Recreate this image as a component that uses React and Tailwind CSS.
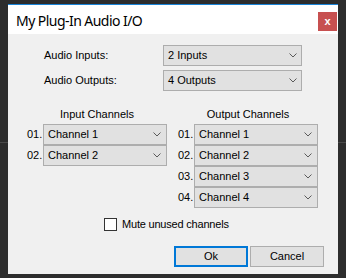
import React from "react";

const FONT = { fontFamily: '"Liberation Sans", Arial, sans-serif' };

function Chevron() {
  return (
    <svg width="8" height="5" viewBox="0 0 8 5" className="shrink-0">
      <path d="M0.5 0.5 L4 4 L7.5 0.5" fill="none" stroke="#5a5a5a" strokeWidth="1" />
    </svg>
  );
}

function Select({ value, w, h = "h-[21px]", pr = "pr-[5px]" }) {
  return (
    <div
      className={`flex items-center justify-between ${h} ${w} ${pr} pl-[4px] bg-[#e1e1e1] border border-[#adadad] text-[11px] text-black box-border`}
    >
      <span>{value}</span>
      <Chevron />
    </div>
  );
}

function ChannelRow({ n, value, w }) {
  return (
    <div className="flex items-center">
      <span className="w-[16px] text-[11px] text-black">{n}</span>
      <Select value={value} w={w} />
    </div>
  );
}

export default function App() {
  return (
    <div className="relative w-[346px] h-[278px] bg-[#2d2d2d] overflow-hidden" style={FONT}>
      <div className="absolute left-0 top-[142px] w-[346px] h-[1px] bg-[#4a4a4a]" />
      <div className="relative pl-[8px] pt-[4px]">
        <div className="w-[330px] h-[270px] flex flex-col border-t border-[#1883d7]">
          {/* Title bar */}
          <div className="h-[29px] bg-white flex items-start justify-between">
            <span
              className="pl-[8px] pt-[5px] text-[14px] text-black"
              style={{ fontFamily: '"Noto Sans", "Liberation Sans", sans-serif', letterSpacing: "-0.55px" }}
            >
              My Plug-In Audio I/O
            </span>
            <div className="mt-[7px] mr-[1px] w-[19px] h-[19px] bg-[#c75050] flex items-center justify-center text-white text-[11px] font-bold leading-none">
              x
            </div>
          </div>
          {/* Body */}
          <div className="flex-1 bg-[#f0f0f0] flex flex-col pt-[11px]">
            <div className="flex items-center pl-[36px]">
              <span className="w-[119px] text-[11px] text-black">Audio Inputs:</span>
              <Select value="2 Inputs" w="w-[139px]" pr="pr-[4px]" />
            </div>
            <div className="flex items-center pl-[36px] mt-[4px]">
              <span className="w-[119px] text-[11px] text-black">Audio Outputs:</span>
              <Select value="4 Outputs" w="w-[139px]" pr="pr-[4px]" />
            </div>

            <div className="flex pl-[19px] gap-[11px] mt-[16px]">
              <div className="w-[140px] flex flex-col">
                <div className="h-[14px] leading-[14px] text-center text-[11px] text-black mb-[3px]">Input Channels</div>
                <ChannelRow n="01." value="Channel 1" w="w-[124px]" />
                <ChannelRow n="02." value="Channel 2" w="w-[124px]" />
              </div>
              <div className="w-[140px] flex flex-col">
                <div className="h-[14px] leading-[14px] text-center text-[11px] text-black mb-[3px]">Output Channels</div>
                <ChannelRow n="01." value="Channel 1" w="w-[124px]" />
                <ChannelRow n="02." value="Channel 2" w="w-[124px]" />
                <ChannelRow n="03." value="Channel 3" w="w-[124px]" />
                <ChannelRow n="04." value="Channel 4" w="w-[124px]" />
              </div>
            </div>

            <div className="flex items-center pl-[96px] mt-[8px]">
              <div className="w-[13px] h-[13px] bg-white border border-[#333333]" />
              <span className="ml-[5px] text-[11px] text-black" style={{ letterSpacing: "-0.2px" }}>Mute unused channels</span>
            </div>

            <div className="flex pl-[166px] gap-[2px] mt-[13px]">
              <div className="w-[74px] h-[21px] flex items-center justify-center bg-[#e1e1e1] border-2 border-[#0078d7] text-[11px] text-black">
                Ok
              </div>
              <div className="w-[74px] h-[21px] flex items-center justify-center bg-[#e1e1e1] border border-[#adadad] text-[11px] text-black">
                Cancel
              </div>
            </div>
          </div>
        </div>
      </div>
    </div>
  );
}
